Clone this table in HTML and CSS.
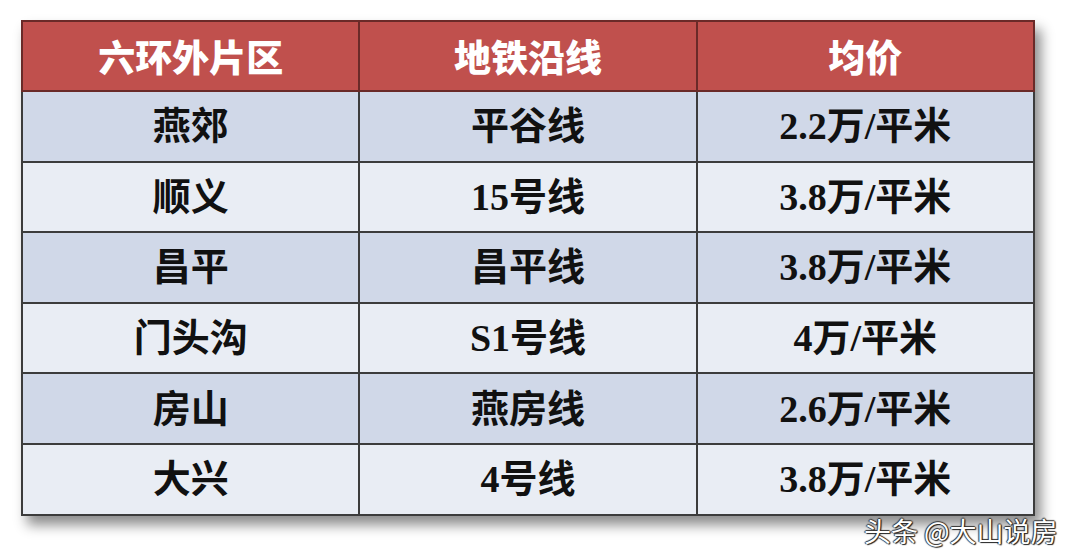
FILE: index.html
```html
<!DOCTYPE html>
<html lang="zh">
<head>
<meta charset="utf-8">
<link rel="stylesheet" href="styles.css">
</head>
<body>
<div class="page">
  <table class="price-table">
    <thead>
      <tr><th>六环外片区</th><th>地铁沿线</th><th>均价</th></tr>
    </thead>
    <tbody>
      <tr class="odd"><td>燕郊</td><td>平谷线</td><td>2.2万/平米</td></tr>
      <tr class="even"><td>顺义</td><td>15号线</td><td>3.8万/平米</td></tr>
      <tr class="odd"><td>昌平</td><td>昌平线</td><td>3.8万/平米</td></tr>
      <tr class="even"><td>门头沟</td><td>S1号线</td><td>4万/平米</td></tr>
      <tr class="odd"><td>房山</td><td>燕房线</td><td>2.6万/平米</td></tr>
      <tr class="even"><td>大兴</td><td>4号线</td><td>3.8万/平米</td></tr>
    </tbody>
  </table>
  <div class="watermark">头条 @大山说房</div>
</div>
</body>
</html>
```
FILE: styles.css
```css
html, body {
  margin: 0;
  padding: 0;
  background: #ffffff;
}
.page {
  position: relative;
  width: 1080px;
  height: 560px;
  padding: 20px 0 0 21px;
  box-sizing: border-box;
}
.price-table {
  width: 1014px;
  border-collapse: collapse;
  table-layout: fixed;
  box-shadow: 6px 9px 12px rgba(0, 0, 0, 0.45);
  font-family: "Liberation Serif", "Noto Sans CJK SC", serif;
  font-weight: bold;
  font-size: 38px;
}
.price-table th,
.price-table td {
  text-align: center;
  padding: 0;
  border: 2px solid #3c3c3c;
  line-height: 1;
}
.price-table th {
  height: 68px;
  background: #c0504d;
  color: #ffffff;
  font-family: "Noto Sans CJK SC", sans-serif;
  font-weight: 900;
  font-size: 37px;
  border-color: #6a2a28;
}
.price-table td {
  height: 68.6px;
  color: #111111;
}
.odd td {
  background: #d0d8e8;
}
.even td {
  background: #e9edf4;
}
.watermark {
  position: absolute;
  left: 864px;
  top: 514px;
  font-family: "Noto Sans CJK SC", sans-serif;
  font-size: 27px;
  color: #ffffff;
  text-shadow: 1px 1px 1px #222, -1px 0 1px #333, 0 -1px 1px #333, 1px 0 1px #333;
  white-space: nowrap;
  line-height: 34px;
}
```
